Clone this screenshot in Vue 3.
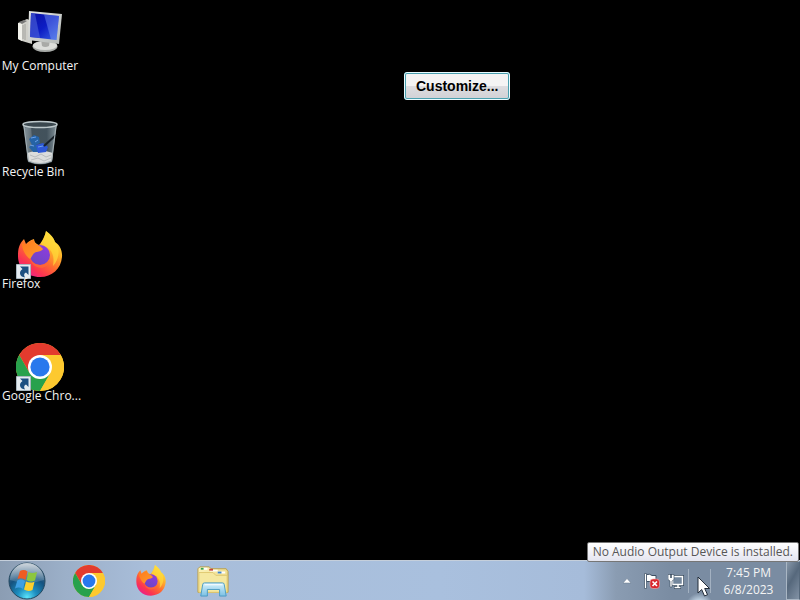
<script setup>
const shortcuts = [
  { id: 'computer', label: 'My Computer' },
  { id: 'bin', label: 'Recycle Bin' },
  { id: 'firefox', label: 'Firefox', link: true },
  { id: 'chrome', label: 'Google Chro...', link: true },
]
const pinned = [
  { id: 'chrome', name: 'Google Chrome' },
  { id: 'firefox', name: 'Firefox' },
  { id: 'explorer', name: 'Windows Explorer' },
]
</script>

<template>
  <div class="screen">
    <svg class="sprites" aria-hidden="true">
      <defs>
        <linearGradient id="blueScreen" x1="0" y1="0" x2="1" y2="1">
          <stop offset="0" stop-color="#0a10a0" /><stop offset=".5" stop-color="#0c1cc4" /><stop offset="1" stop-color="#3f68e4" />
        </linearGradient>
        <linearGradient id="silver" x1="0" y1="0" x2="1" y2="1">
          <stop offset="0" stop-color="#e4e6e4" /><stop offset="1" stop-color="#b4b8b6" />
        </linearGradient>
        <linearGradient id="glass" x1="0" y1="0" x2="1" y2="0">
          <stop offset="0" stop-color="#7b8b94" /><stop offset=".25" stop-color="#43525b" /><stop offset=".7" stop-color="#42525c" /><stop offset="1" stop-color="#84939a" />
        </linearGradient>
        <linearGradient id="foxBody" x1=".85" y1=".05" x2=".2" y2=".95">
          <stop offset="0" stop-color="#fff04a" /><stop offset=".3" stop-color="#ffb52a" /><stop offset=".58" stop-color="#ff6a30" /><stop offset=".82" stop-color="#fb3352" /><stop offset="1" stop-color="#e8208c" />
        </linearGradient>
        <linearGradient id="foxHead" x1="0" y1="0" x2="1" y2="1">
          <stop offset="0" stop-color="#ff7a1e" /><stop offset="1" stop-color="#ff9d2c" />
        </linearGradient>
        <linearGradient id="foxGlobe" x1=".8" y1="0" x2=".2" y2="1">
          <stop offset="0" stop-color="#8f3be0" /><stop offset="1" stop-color="#6a48c0" />
        </linearGradient>
        <linearGradient id="folder" x1="0" y1="0" x2="1" y2="1">
          <stop offset="0" stop-color="#fdf5bd" /><stop offset="1" stop-color="#e5cd70" />
        </linearGradient>
        <linearGradient id="stand" x1="0" y1="0" x2="0" y2="1">
          <stop offset="0" stop-color="#d5f2fd" /><stop offset="1" stop-color="#7cc0e2" />
        </linearGradient>
        <radialGradient id="orb" cx=".5" cy=".95" r=".9">
          <stop offset="0" stop-color="#5be4fa" /><stop offset=".3" stop-color="#1c8ec0" /><stop offset=".65" stop-color="#15527f" /><stop offset="1" stop-color="#56738d" />
        </radialGradient>
        <linearGradient id="orbShine" x1="0" y1="0" x2="0" y2="1">
          <stop offset="0" stop-color="#fff" stop-opacity=".7" /><stop offset="1" stop-color="#fff" stop-opacity=".1" />
        </linearGradient>
      </defs>

      <symbol id="icon-computer" viewBox="0 0 48 48">
        <path d="M2 16 11 12 16 14V37L6 34 2 32Z" fill="#cfcfc9" />
        <path d="M2 16 6 17V34L2 32Z" fill="#f2f2ec" />
        <path d="M3 15 8 13 11 14 6 17Z" fill="#777" />
        <path d="M7 18v14M9 17v16" stroke="#a2a29e" />
        <ellipse cx="29" cy="39.500" rx="12.500" ry="5.500" fill="#a8aba8" />
        <ellipse cx="29" cy="38.500" rx="12" ry="4.500" fill="#dcddda" />
        <path d="M25 32h9l-1 7q-4 2-7 0Z" fill="#a9aaa7" />
        <path d="M13 4 46 7 43 37 12 33Z" fill="url(#silver)" />
        <path d="M15 6 43 9 40.500 33 14 30Z" fill="url(#blueScreen)" />
        <path d="M15 6 19 6.500 24 31 14 30Z" fill="#4c64da" opacity=".6" />
        <path d="M28 7.500 43 9 40.500 33 35 32.500Z" fill="#86a8fa" opacity=".4" />
      </symbol>

      <symbol id="icon-bin" viewBox="0 0 48 48">
        <path d="M7 5H41L36 43Q24 48 12 43Z" fill="url(#glass)" />
        <path d="M9 9 15 7 18 43 13 41Z" fill="#aebbc0" opacity=".3" />
        <path d="M11 34Q24 29 37 34L36 42Q24 48 12 42Z" fill="#dcdddc" />
        <path d="m14 36 5 2 6-3 5 3 5-2M15 41l7-2 6 3 7-3" fill="none" stroke="#b8bcbe" />
        <path d="m13 20 5-4 5 2 1 6-4 2 5 2-2 5-6 0-4-5 3-2Z" fill="#2563a6" />
        <path d="m20 26 7-2 5 4-2 5-8 1Z" fill="#2d58d6" />
        <path d="m15 19 5-1M14 26l4 1M22 28l5-1M19 23l3-2" fill="none" stroke="#6da0e8" />
        <path d="M40 16 28 27" stroke="#182129" stroke-width="2" />
        <ellipse cx="24" cy="5.500" rx="17" ry="3" fill="#3a474e" stroke="#bcc7ca" stroke-width="1.500" />
        <path d="M8 7 12.500 42Q24 47 35.500 42L40 7" fill="none" stroke="#a5b0b4" />
      </symbol>

      <symbol id="icon-firefox" viewBox="0 0 48 48">
        <path d="M30 0C35 4 38 7 39 11C44 14 46.500 20 46 26C45 38 36 46 24 46C11 46 2 37 2 25C2 18 3 13 8 8L10 13C12 11 14 9 18 8C18 11 20 13 23 14C26 11 29 5 30 0Z" fill="url(#foxBody)" />
        <path d="M30 0C35 4 38 7 39 11C45 17 43 29 37 35C39 23 35 18 28 15C26 14 25 13 25 12C28 8 29 4 30 0Z" fill="#ffdb3b" opacity=".7" />
        <circle cx="24" cy="24" r="10" fill="url(#foxGlobe)" />
        <path d="M6 12 10 14C13 11 15 9 18 9C18 12 20 14 24 15L27 18C26 20 22 21 20 21C17 22 16 26 14 28C11 26 6 20 6 12Z" fill="url(#foxHead)" />
        <path d="M13 25C15 35 28 37 34 29C33 39 16 41 13 25Z" fill="#ff6a35" opacity=".75" />
      </symbol>

      <symbol id="icon-chrome" viewBox="0 0 48 48">
        <circle cx="24" cy="24" r="24" fill="#fcc934" />
        <path d="M24 12H44.800A24 24 0 0 0 3.200 12L13.600 30Z" fill="#e33b2e" />
        <path d="M3.200 12 13.600 30 24 36 34.400 30 24 48A24 24 0 0 1 3.200 12Z" fill="#28a14c" />
        <path d="M24 12H44.800A24 24 0 0 1 24 48L34.400 30Z" fill="#fdc92f" />
        <circle cx="24" cy="24" r="12" fill="#fff" />
        <circle cx="24" cy="24" r="9.600" fill="#2878ed" />
      </symbol>

      <symbol id="icon-explorer" viewBox="0 0 34 34">
        <path d="M1 4 3 2H13L15 4H31L33 7V29H1Z" fill="url(#folder)" stroke="#b99d46" />
        <path d="M4 4h7M14 6h8M22 8h8" stroke="#fff" stroke-width="2" />
        <path d="M4 4h3" stroke="#39a34c" stroke-width="2" /><path d="M13 5h4" stroke="#c94639" stroke-width="2" /><path d="M22 8h4" stroke="#3e83ca" stroke-width="2" />
        <path d="M2 8H17L20 11H32V29H2Z" fill="#f5e8a0" stroke="#dfc870" />
        <path d="M6 21Q6 19 8 19H27Q29 19 29 21L31 33H24V26H11V33H4Z" fill="url(#stand)" stroke="#479bc4" />
        <path d="M8 21h19" stroke="#fff" />
      </symbol>

      <symbol id="icon-start" viewBox="0 0 38 38">
        <circle cx="19" cy="19" r="18" fill="url(#orb)" stroke="#24485f" />
        <path d="M2 18A17 17 0 0 1 36 18Q19 24 2 18Z" fill="url(#orbShine)" />
        <path d="M12 9Q16 7 19.500 9.500L17.500 18Q14 15 9.500 17Z" fill="#ee5b23" />
        <path d="M20.500 10Q24 12 29 10L27 18.500Q22 20.500 18.500 18Z" fill="#8cc63e" />
        <path d="M9.300 18.500Q13 16.500 17 19L15 27Q11 24.500 7 26.500Z" fill="#3f9fe2" />
        <path d="M18 19.500Q21.500 21.500 26.500 19.700L24.500 28Q20 30 16 27.500Z" fill="#fdcf2c" />
      </symbol>

      <symbol id="icon-link" viewBox="0 0 15 15">
        <path d="M.5.5h14v14H.5Z" fill="#e4ebf0" stroke="#a9b7c0" />
        <path d="M4 2.500H12.500V11L10 8.500C8 9.500 7.500 11 9 13.500C4 13 2 8 6.500 5Z" fill="#1c4f81" />
      </symbol>
    </svg>

    <main class="desktop">
      <nav class="shortcuts" aria-label="Desktop">
        <button v-for="s in shortcuts" :key="s.id" type="button" class="shortcut" :class="s.id">
          <span class="picture">
            <svg class="large"><use :href="'#icon-' + s.id" /></svg>
            <svg v-if="s.link" class="badge"><use href="#icon-link" /></svg>
          </span>
          <span class="caption">{{ s.label }}</span>
        </button>
      </nav>
      <button type="button" class="customize">Customize...</button>
    </main>

    <footer class="taskbar">
      <button type="button" class="start" aria-label="Start"><svg><use href="#icon-start" /></svg></button>
      <button v-for="p in pinned" :key="p.id" type="button" class="pin" :aria-label="p.name">
        <svg><use :href="'#icon-' + p.id" /></svg>
      </button>

      <div class="tray">
        <button type="button" class="tray-button" aria-label="Show hidden icons">
          <svg viewBox="0 0 16 16"><path d="M3 10 7 5.500 11 10Z" fill="#fff" stroke="#66798e" stroke-width=".5" /></svg>
        </button>
        <button type="button" class="tray-button" aria-label="Action Center">
          <svg viewBox="0 0 16 16">
            <path d="M2.500 1.500Q6 .5 8 2.500H12V9.500H7L6 8.500H2.500Z" fill="#fff" stroke="#3c4f63" />
            <path d="M.5.5h2v15h-2Z" fill="#fff" stroke="#3c4f63" stroke-width=".7" />
            <rect x="6" y="6" width="9.500" height="9.500" rx="3" fill="#d8262c" stroke="#f0b4b4" stroke-width=".6" />
            <path d="m8.500 8.500 4.500 4.500m0-4.500-4.500 4.500" stroke="#fff" stroke-width="1.600" />
          </svg>
        </button>
        <button type="button" class="tray-button" aria-label="Network">
          <svg viewBox="0 0 16 16">
            <path d="M4.500 3.500H14.500V11.500H4.500ZM6 14.500h7" fill="none" stroke="#34475a" stroke-width="3" />
            <path d="M4.500 3.500H14.500V11.500H4.500Z" fill="#73879d" stroke="#fff" stroke-width="1.500" />
            <path d="M10 12v2M6.500 14.500h6" stroke="#fff" stroke-width="1.500" />
            <path d="M0 1.500H6V6.500L4 8V14H2V8L0 6.500Z" fill="#fff" stroke="#34475a" stroke-width=".6" />
            <path d="M3 1v4" stroke="#34475a" stroke-width="1.500" />
          </svg>
        </button>
        <div class="audio">
          <svg class="pointer" viewBox="0 0 14 21" aria-hidden="true">
            <path d="M1 1V17L4.700 13.500 7.500 20 10.500 18.700 7.700 12.500H12.500Z" fill="#fff" stroke="#222c38" />
          </svg>
        </div>
        <time class="clock" datetime="2023-06-08T19:45"><span>7:45 PM</span><span>6/8/2023</span></time>
        <button type="button" class="peek" aria-label="Show desktop"></button>
      </div>
      <div class="tooltip" role="tooltip">No Audio Output Device is installed.</div>
    </footer>
  </div>
</template>

<style>
body {
  margin: 0;
  background: #000;
}
</style>

<style scoped>
.screen {
  display: flex;
  flex-direction: column;
  min-height: 100vh;
  overflow: hidden;
  background: #000;
  color: #f4f4f4;
  font: 12px/16px "Open Sans", "Noto Sans", sans-serif;
}
button {
  padding: 0;
  border: 0;
  background: none;
  color: inherit;
  font: inherit;
}
svg {
  display: block;
}
.sprites {
  position: absolute;
  width: 0;
  height: 0;
}
.desktop {
  position: relative;
  flex: 1;
}
.shortcuts {
  display: flex;
  flex-direction: column;
  width: 80px;
  padding-top: 7px;
}
.shortcut {
  display: flex;
  flex-direction: column;
  height: 112px;
  text-align: left;
}
.picture {
  position: relative;
  align-self: center;
}
.large {
  width: 48px;
  height: 48px;
}
.badge {
  position: absolute;
  left: 0;
  bottom: 0;
  width: 15px;
  height: 15px;
}
.caption {
  position: relative;
  margin-top: -3px;
  padding-left: 2px;
  white-space: nowrap;
}
.computer .caption {
  margin-top: 3px;
  padding: 0;
  text-align: center;
}
.customize {
  position: absolute;
  left: 404px;
  top: 72px;
  padding: 3px 10px;
  border: 2px solid #4a9fae;
  border-radius: 3px;
  outline: 1px solid #e8fbff;
  outline-offset: -1px;
  background: linear-gradient(#f4f4f4 0 48%, #dddde0 52%, #d2d2d6);
  color: #000;
  font: bold 14px/18px "Liberation Sans", Arial, sans-serif;
}
.taskbar {
  position: relative;
  display: flex;
  box-sizing: border-box;
  height: 40px;
  border-top: 1px solid #c5cfdb;
  background: linear-gradient(90deg, #8b9db3, #9bafc8 8%, #a8bdd9 18%, #a9c0de 55%, #a6bcda 73%, #8a9cb2 77%, #7a8ca2 84%, #7a8ca2);
}
.start {
  display: grid;
  place-items: center;
  width: 54px;
  margin-right: 4px;
}
.start svg {
  width: 38px;
  height: 38px;
}
.pin {
  display: grid;
  place-items: center;
  width: 62px;
}
.pin svg {
  width: 32px;
  height: 32px;
}
.tray {
  display: flex;
  align-items: center;
  margin-left: auto;
}
.tray-button {
  display: grid;
  place-items: center;
  width: 24px;
  height: 32px;
}
.tray-button svg {
  width: 16px;
  height: 16px;
}
.audio {
  position: relative;
  box-sizing: border-box;
  align-self: stretch;
  width: 23px;
  margin-top: 8px;
  background:
    linear-gradient(#a3b1c1, #a3b1c1) left top / 1px 24px no-repeat,
    linear-gradient(#a3b1c1, #a3b1c1) right top / 1px 24px no-repeat,
    radial-gradient(circle at 50% 38px, #c5d8e8 6px, transparent 14px);
}
.pointer {
  position: absolute;
  left: 9px;
  top: 7px;
  z-index: 2;
  width: 14px;
  height: 21px;
}
.clock {
  display: flex;
  flex-direction: column;
  width: 75px;
  line-height: 17px;
  text-align: center;
}
.peek {
  align-self: stretch;
  width: 14px;
  border: 1px solid #a9b6c4;
  border-right-color: #56687b;
  background: linear-gradient(120deg, #8797a9, #56687c 45%, #8292a5);
}
.tooltip {
  position: absolute;
  right: 1px;
  bottom: 38px;
  box-sizing: border-box;
  padding: 1px 5px;
  border: 1px solid #767676;
  border-radius: 2px;
  background: linear-gradient(#fff, #e4e5f0);
  color: #575757;
  white-space: nowrap;
}
</style>
